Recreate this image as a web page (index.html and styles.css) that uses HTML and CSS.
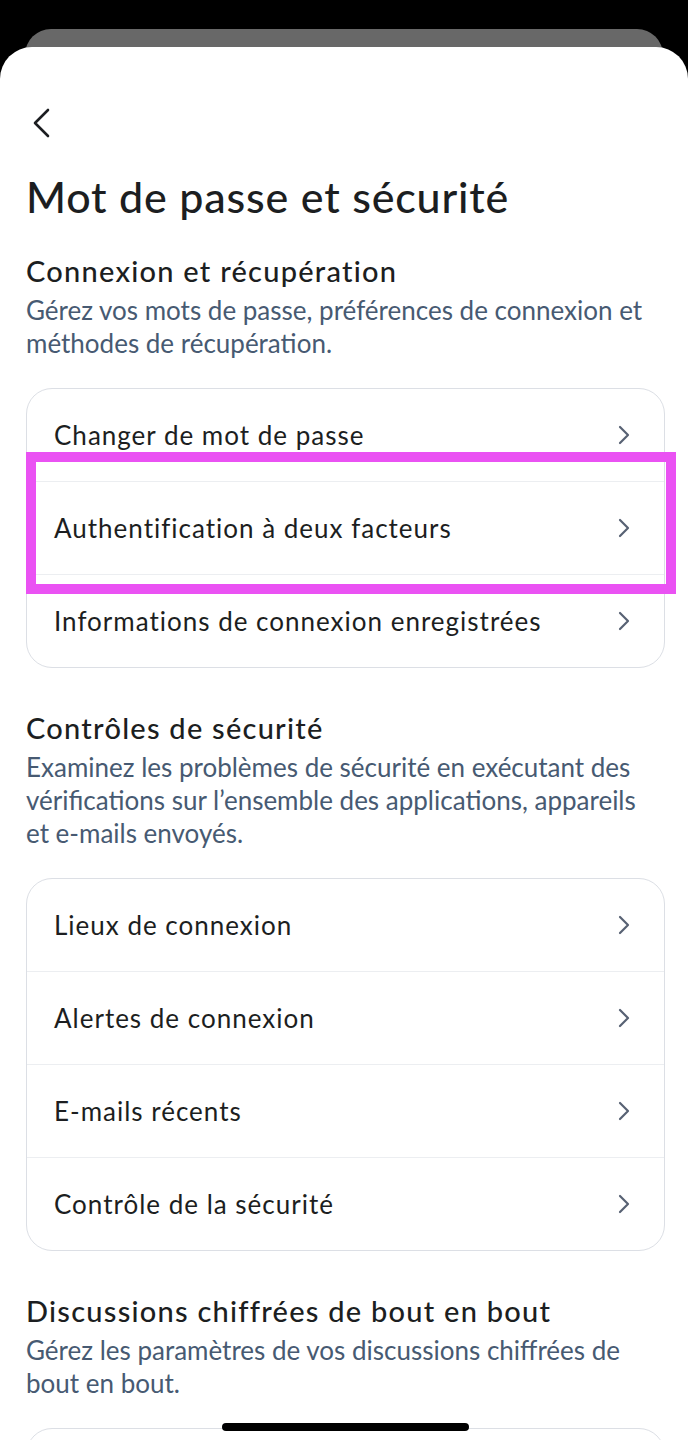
FILE: index.html
```html
<!DOCTYPE html>
<html lang="fr">
<head>
  <meta charset="utf-8">
  <title>Mot de passe et sécurité</title>
  <link rel="stylesheet" href="styles.css">
</head>
<body>
<div class="stack-card"></div>
<div class="sheet">
  <div class="nav">
    <svg class="back" width="22" height="30" viewBox="0 0 22 30">
      <polyline points="18,2 5,15 18,28" fill="none" stroke="#1c1e21" stroke-width="2.6" stroke-linecap="round" stroke-linejoin="round"/>
    </svg>
  </div>

  <h1 class="title">Mot de passe et sécurité</h1>

  <div class="section">
    <h2 class="section-title">Connexion et récupération</h2>
    <p class="section-desc">Gérez vos mots de passe, préférences de connexion et méthodes de récupération.</p>
    <div class="card">
      <div class="row"><span class="label">Changer de mot de passe</span><svg class="chev" width="14" height="22" viewBox="0 0 14 22"><polyline points="3,3 11,11 3,19"/></svg></div>
      <div class="row"><span class="label">Authentification à deux facteurs</span><svg class="chev" width="14" height="22" viewBox="0 0 14 22"><polyline points="3,3 11,11 3,19"/></svg></div>
      <div class="row"><span class="label">Informations de connexion enregistrées</span><svg class="chev" width="14" height="22" viewBox="0 0 14 22"><polyline points="3,3 11,11 3,19"/></svg></div>
      <div class="highlight"></div>
    </div>
  </div>

  <div class="section">
    <h2 class="section-title">Contrôles de sécurité</h2>
    <p class="section-desc">Examinez les problèmes de sécurité en exécutant des vérifications sur l’ensemble des applications, appareils et e-mails envoyés.</p>
    <div class="card">
      <div class="row"><span class="label">Lieux de connexion</span><svg class="chev" width="14" height="22" viewBox="0 0 14 22"><polyline points="3,3 11,11 3,19"/></svg></div>
      <div class="row"><span class="label">Alertes de connexion</span><svg class="chev" width="14" height="22" viewBox="0 0 14 22"><polyline points="3,3 11,11 3,19"/></svg></div>
      <div class="row"><span class="label">E-mails récents</span><svg class="chev" width="14" height="22" viewBox="0 0 14 22"><polyline points="3,3 11,11 3,19"/></svg></div>
      <div class="row"><span class="label">Contrôle de la sécurité</span><svg class="chev" width="14" height="22" viewBox="0 0 14 22"><polyline points="3,3 11,11 3,19"/></svg></div>
    </div>
  </div>

  <div class="section">
    <h2 class="section-title">Discussions chiffrées de bout en bout</h2>
    <p class="section-desc">Gérez les paramètres de vos discussions chiffrées de bout en bout.</p>
    <div class="card">
      <div class="row"></div>
    </div>
  </div>
</div>
<div class="home-indicator"></div>
</body>
</html>
```

FILE: styles.css
```css
html, body{
  margin: 0;
  height: 1440px;
  overflow: hidden;
}
body{
  background-color: #000;
  font-family: "Lato", "Noto Sans", sans-serif;
  color: #1c1e21;
}

.stack-card{
  height: 40px;
  margin: 29px 25px 0 25px;
  background-color: #686868;
  border-radius: 26px 26px 0 0;
}

.sheet{
  margin-top: -22px;
  background-color: #fff;
  border-radius: 32px 32px 0 0;
  padding: 0 23px 0 26px;
  min-height: 1440px;
}

.nav{
  padding-top: 61px;
  height: 30px;
  margin-left: 4px;
}
.back{
  display: block;
}

.title{
  margin: 33px 0 0 0;
  font-size: 43px;
  line-height: 52px;
  font-weight: 500;
  letter-spacing: 0.8px;
}

.section-title{
  margin: 0;
  font-size: 29px;
  line-height: 36px;
  font-weight: 500;
  letter-spacing: 1.25px;
}
.section{
  margin-top: 30px;
}
.section + .section{
  margin-top: 42px;
}

.section-desc{
  margin: 5px 0 0 0;
  width: 630px;
  font-size: 26px;
  line-height: 33px;
  color: #475a72;
}

.card{
  position: relative;
  margin-top: 28px;
  border: 1.5px solid #dcdfe5;
  border-radius: 26px;
}

.row{
  display: flex;
  align-items: center;
  justify-content: space-between;
  height: 92px;
  padding: 0 33px 0 27px;
  border-top: 1px solid #eceef1;
  font-size: 26px;
  letter-spacing: 1px;
}
.row:first-child{
  border-top: none;
}

.chev{
  display: block;
}
.chev polyline{
  fill: none;
  stroke: #576173;
  stroke-width: 2.2;
  stroke-linecap: round;
  stroke-linejoin: round;
}

.highlight{
  position: absolute;
  box-sizing: border-box;
  left: -1.5px;
  right: -11.5px;
  top: 63px;
  height: 142px;
  border: 10px solid #ea52f3;
}

.home-indicator{
  position: fixed;
  left: 222px;
  bottom: 9px;
  width: 247px;
  height: 8px;
  border-radius: 4px;
  background-color: #000;
}
```
